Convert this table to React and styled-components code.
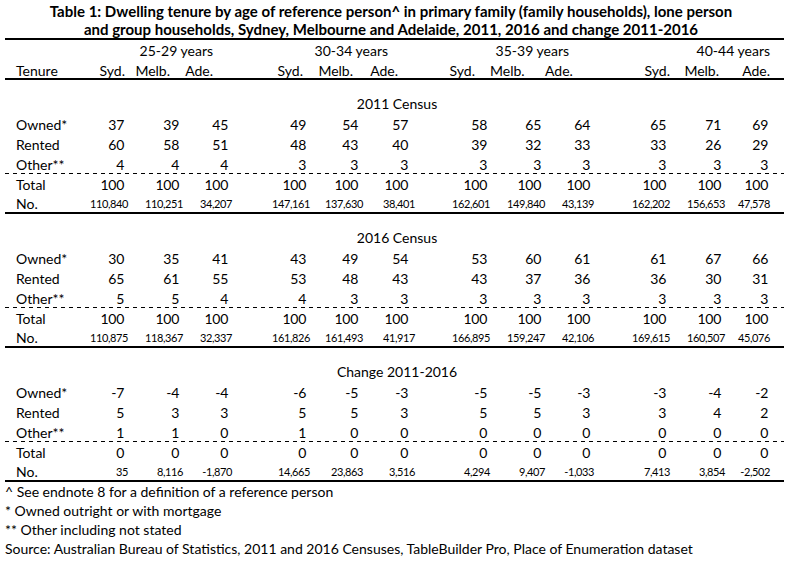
import React from "react";
import styled, { createGlobalStyle } from "styled-components";

const GlobalStyle = createGlobalStyle`
  body {
    margin: 0;
    background: #fff;
    color: #000;
    font-family: Lato, "Liberation Sans", sans-serif;
  }
`;

// right edges of the 12 value columns (page x), taken from the "No." row
const EDGES = [128, 183, 232, 310, 363, 415, 490, 545, 594, 670, 725, 770];
const START = 5;
const LABEL_END = 85;
const TRACKS = [LABEL_END - START]
  .concat(EDGES.map((e, i) => e - (i === 0 ? LABEL_END : EDGES[i - 1])))
  .map((w) => `${w}px`)
  .join(" ");

// how far each kind of text sits left of the column edge
const VALUE_PAD = [4, 4, 4, 4, 5, 7, 3, 4, 4, 4, 4, 2];
const HEAD_PAD = [3, 13, 19, 7, 10, 17, 15, 21, 25, 0, 6, 0];
const AGE_PAD = [19, 27, 25, 0];

const AGES = ["25-29 years", "30-34 years", "35-39 years", "40-44 years"];
const CITIES = ["Syd.", "Melb.", "Ade."];

const SECTIONS = [
  {
    title: "2011 Census",
    rows: [
      ["Owned*", "37 39 45 49 54 57 58 65 64 65 71 69"],
      ["Rented", "60 58 51 48 43 40 39 32 33 33 26 29"],
      ["Other**", "4 4 4 3 3 3 3 3 3 3 3 3"],
      ["Total", "100 100 100 100 100 100 100 100 100 100 100 100"],
      [
        "No.",
        "110,840 110,251 34,207 147,161 137,630 38,401 162,601 149,840 43,139 162,202 156,653 47,578",
      ],
    ],
  },
  {
    title: "2016 Census",
    rows: [
      ["Owned*", "30 35 41 43 49 54 53 60 61 61 67 66"],
      ["Rented", "65 61 55 53 48 43 43 37 36 36 30 31"],
      ["Other**", "5 5 4 4 3 3 3 3 3 3 3 3"],
      ["Total", "100 100 100 100 100 100 100 100 100 100 100 100"],
      [
        "No.",
        "110,875 118,367 32,337 161,826 161,493 41,917 166,895 159,247 42,106 169,615 160,507 45,076",
      ],
    ],
  },
  {
    title: "Change 2011-2016",
    rows: [
      ["Owned*", "-7 -4 -4 -6 -5 -3 -5 -5 -3 -3 -4 -2"],
      ["Rented", "5 3 3 5 5 3 5 5 3 3 4 2"],
      ["Other**", "1 1 0 1 0 0 0 0 0 0 0 0"],
      ["Total", "0 0 0 0 0 0 0 0 0 0 0 0"],
      [
        "No.",
        "35 8,116 -1,870 14,665 23,863 3,516 4,294 9,407 -1,033 7,413 3,854 -2,502",
      ],
    ],
  },
];

const NOTES = [
  "^ See endnote 8 for a definition of a reference person",
  "* Owned outright or with mortgage",
  "** Other including not stated",
  "Source: Australian Bureau of Statistics, 2011 and 2016 Censuses, TableBuilder Pro, Place of Enumeration dataset",
];

const App = () => {
  return (
    <Page>
      <GlobalStyle />
      <Title>
        Table 1: Dwelling tenure by age of reference person^ in primary family
        (family households), lone person
        <br />
        and group households, Sydney, Melbourne and Adelaide, 2011, 2016 and
        change 2011-2016
      </Title>
      <Table>
        <AgeRow>
          {AGES.map((age, g) => (
            <AgeLabel key={age} $col={3 * g + 3} $pad={AGE_PAD[g]}>
              {age}
            </AgeLabel>
          ))}
        </AgeRow>
        <HeadRow>
          <Label>Tenure</Label>
          {EDGES.map((_, i) => (
            <HeadCell key={i} $pad={HEAD_PAD[i]}>
              {CITIES[i % 3]}
            </HeadCell>
          ))}
        </HeadRow>
        {SECTIONS.map((section) => (
          <Section key={section.title}>
            <SectionTitle>{section.title}</SectionTitle>
            {section.rows.map(([label, values]) => {
              const isCount = label === "No.";
              return (
                <Row
                  key={label}
                  $rule={
                    label === "Other**" ? "dashed" : isCount ? "solid" : "none"
                  }
                >
                  <Label>{label}</Label>
                  {values.split(" ").map((v, i) => (
                    <Value
                      key={i}
                      $small={isCount}
                      $pad={isCount ? 0 : VALUE_PAD[i]}
                    >
                      {v}
                    </Value>
                  ))}
                </Row>
              );
            })}
          </Section>
        ))}
      </Table>
      <Notes>
        {NOTES.map((n) => (
          <Note key={n}>{n}</Note>
        ))}
      </Notes>
    </Page>
  );
};

export default App;

// Styled Components
const Page = styled.div`
  width: 792px;
  font-size: 14px;
`;

const Title = styled.h1`
  margin: 0;
  padding: 2px 10px 0 0;
  height: 38px;
  box-sizing: border-box;
  font-size: 15px;
  line-height: 18px;
  font-weight: 700;
  text-align: center;
  white-space: nowrap;
`;

const Table = styled.div`
  margin-left: ${START}px;
  width: 779px;
  border-top: 2px solid #000;
`;

const Grid = styled.div`
  display: grid;
  grid-template-columns: ${TRACKS};
  align-items: center;
  height: 20px;
  box-sizing: border-box;
`;

const AgeRow = styled(Grid)``;

const AgeLabel = styled.div`
  grid-column: ${(p) => p.$col} / span 2;
  text-align: right;
  padding-right: ${(p) => p.$pad}px;
  white-space: nowrap;
`;

const HeadRow = styled(Grid)`
  border-bottom: 2px solid #000;
  align-items: start;
  padding-top: 2px;
`;

const HeadCell = styled.div`
  text-align: right;
  padding-right: ${(p) => p.$pad}px;
`;

const Label = styled.div`
  padding-left: 11px;
  white-space: nowrap;
`;

const Section = styled.div`
  padding-top: 14px;
`;

const SectionTitle = styled.div`
  height: 20px;
  line-height: 20px;
  padding-left: 5px;
  text-align: center;
`;

const Row = styled(Grid)`
  border-bottom: ${(p) =>
    p.$rule === "solid" ? "2px solid #000" : "none"};
  background: ${(p) =>
    p.$rule === "dashed"
      ? "repeating-linear-gradient(to right, #000 0 4px, transparent 4px 8px) bottom left / 100% 1px no-repeat"
      : "none"};
`;

const Value = styled.div`
  text-align: right;
  padding-right: ${(p) => p.$pad}px;
  font-size: ${(p) => (p.$small ? "11px" : "14px")};
  letter-spacing: ${(p) => (p.$small ? "-0.4px" : "-0.3px")};
  white-space: nowrap;
`;

const Notes = styled.div`
  padding-left: 5px;
`;

const Note = styled.div`
  height: 19px;
  line-height: 19px;
  white-space: nowrap;
`;
